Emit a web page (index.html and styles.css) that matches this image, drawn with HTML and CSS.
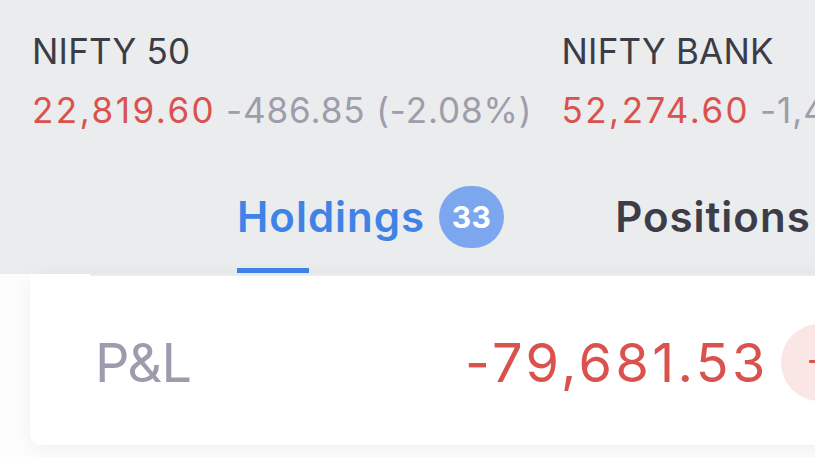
FILE: index.html
```html
<!DOCTYPE html>
<html lang="en">
<head>
<meta charset="utf-8">
<title>Holdings</title>
<link rel="stylesheet" href="styles.css">
</head>
<body>
<div class="screen">
  <header class="header">
    <div class="indices">
      <div class="index">
        <div class="index-name">NIFTY 50</div>
        <div class="index-values"><span class="price">22,819.60</span> <span class="change">-486.85 (-2.08%)</span></div>
      </div>
      <div class="index">
        <div class="index-name">NIFTY BANK</div>
        <div class="index-values"><span class="price">52,274.60</span> <span class="change">-1,411.20 (-2.63%)</span></div>
      </div>
    </div>
    <nav class="tabs">
      <div class="tab tab-active">
        <div class="tab-label">Holdings <span class="badge">33</span></div>
        <div class="tab-bar"></div>
      </div>
      <div class="tab">
        <div class="tab-label">Positions</div>
        <div class="tab-bar tab-bar-hidden"></div>
      </div>
    </nav>
  </header>
  <main class="content">
    <section class="card">
      <div class="divider"></div>
      <div class="pnl-row">
        <span class="pnl-label">P&amp;L</span>
        <span class="pnl-value">-79,681.53</span>
        <span class="pnl-pill">-8.12%</span>
      </div>
    </section>
  </main>
</div>
</body>
</html>
```

FILE: styles.css
```css
html, body {
  margin: 0;
  padding: 0;
  background: #fdfdfd;
}

body {
  font-family: Inter, "Noto Sans", "Liberation Sans", sans-serif;
  width: 815px;
  height: 457px;
  overflow: hidden;
}

.screen {
  width: 815px;
  height: 457px;
  overflow: hidden;
}

.header {
  background: #ebecee;
  padding: 29px 0 0 32px;
  height: 274px;
  box-sizing: border-box;
  white-space: nowrap;
}

.indices {
  display: flex;
  gap: 29px;
}

.index {
  flex: none;
}

.index-name {
  font-size: 35px;
  line-height: 44px;
  color: #3b3c46;
  letter-spacing: 0.2px;
}

.index-values {
  margin-top: 15px;
  font-size: 35px;
  line-height: 44px;
}

.price {
  color: #d9524e;
  letter-spacing: 2.5px;
}

.change {
  color: #9d9dab;
  letter-spacing: 0.9px;
}

.tabs {
  display: flex;
  margin-top: 54px;
  padding-left: 173px;
  gap: 47px;
}

.tab {
  display: flex;
  flex-direction: column;
  padding: 0 32px;
}

.tab-label {
  display: flex;
  align-items: center;
  gap: 14px;
  font-size: 42px;
  line-height: 62px;
  font-weight: 600;
  letter-spacing: 1px;
  color: #3c3d48;
}

.tab-active .tab-label {
  color: #3f83e6;
}

.badge {
  min-width: 65px;
  height: 62px;
  box-sizing: border-box;
  padding: 0 12px;
  border-radius: 31px;
  background: #7ca7ee;
  color: #ffffff;
  font-size: 30px;
  font-weight: 700;
  letter-spacing: 0.5px;
  display: flex;
  align-items: center;
  justify-content: center;
}

.tab-bar {
  margin-top: 20px;
  width: 72px;
  height: 5px;
  background: #3f83e6;
}

.tab-bar-hidden {
  background: transparent;
}

.content {
  padding-left: 30px;
}

.card {
  width: 900px;
  background: #ffffff;
  border-radius: 0 0 12px 12px;
  box-shadow: 0 4px 22px rgba(0, 0, 0, 0.06);
  padding-bottom: 44px;
}

.divider {
  height: 2px;
  margin-left: 60px;
  background: #ebecee;
}

.pnl-row {
  display: flex;
  align-items: center;
  margin-top: 48px;
  padding-left: 65px;
  font-size: 54px;
  line-height: 77px;
  white-space: nowrap;
}

.pnl-label {
  color: #9c9cae;
  width: 90px;
  letter-spacing: -0.5px;
}

.pnl-value {
  margin-left: 280px;
  color: #d9524e;
  letter-spacing: 3.4px;
}

.pnl-pill {
  margin-left: 12px;
  height: 77px;
  padding: 0 26px;
  border-radius: 39px;
  background: #fbe6e6;
  color: #d9524e;
  font-size: 36px;
  display: flex;
  align-items: center;
}
```
